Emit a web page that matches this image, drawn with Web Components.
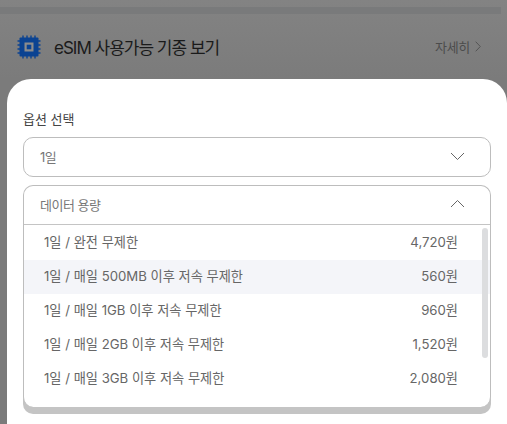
<!DOCTYPE html>
<html lang="ko"><head><meta charset="utf-8"><style>
html,body{margin:0;padding:0;height:100%;overflow:hidden}
body{font-family:Inter,"Noto Sans CJK KR",sans-serif;background:#808080}
</style></head><body>
<template id="t-backdrop"><style>
:host{display:flex;flex-direction:column;width:507px;height:424px;overflow:hidden;background:linear-gradient(#838383,#7b7b7b 79px);color:#222}
.stripe{height:7px;margin-top:7px;margin-right:6px;background:#797a7b;flex:none}
.row{box-sizing:border-box;height:49px;margin-top:9px;display:flex;align-items:center;padding:0 26px 2px 17px;flex:none;font-size:17px;letter-spacing:-1px}
svg{width:24px;height:24px;flex:none;margin-right:13px}
.t{flex:1;color:#1a1a1a}
.m{font-size:13px;color:#4c4c4c;display:flex;align-items:center;gap:5px;letter-spacing:-.3px}
.m svg{width:6px;height:11px;margin:0}
.sheet{flex:1;margin-top:7px;display:flex}
</style>
<div class="stripe"></div>
<div class="row">
<svg viewBox="0 0 24 24"><path fill="#0b4392" d="M3.500 2.500h17a1 1 0 0 1 1 1v17a1 1 0 0 1-1 1h-17a1 1 0 0 1-1-1v-17a1 1 0 0 1 1-1z"/><path stroke="#0b4392" stroke-width="1.400" fill="none" d="M6 .500v3M10 .500v3M14 .500v3M18 .500v3M6 20.500v3M10 20.500v3M14 20.500v3M18 20.500v3M.500 6h3M.500 10h3M.500 14h3M.500 18h3M20.500 6h3M20.500 10h3M20.500 14h3M20.500 18h3"/><rect x="7.500" y="7.500" width="9" height="9" fill="#8c8c8c"/><rect x="9.700" y="9.700" width="4.600" height="4.600" fill="#0b4392"/></svg>
<span class="t">eSIM 사용가능 기종 보기</span>
<span class="m">자세히<svg viewBox="0 0 6 11"><path d="M.7 .7l4.600 4.800-4.600 4.800" fill="none" stroke="#555" stroke-width="1"/></svg></span>
</div>
<div class="sheet"><slot></slot></div>
</template>

<template id="t-sheet"><style>
:host{display:block;box-sizing:border-box;width:500px;height:360px;margin-left:7px;background:#fff;border-radius:24px 24px 0 0;padding:30px 16px 0}
.l{font-size:13px;color:#444;line-height:20px;margin-bottom:8px;font-weight:400}
.g{display:flex;flex-direction:column;gap:8px}
</style><div class="l">옵션 선택</div><div class="g"><slot></slot></div></template>

<template id="t-select"><style>
:host{display:block;box-sizing:border-box;width:468px;border:1px solid #bdbdbd;border-radius:10px;background:#fff;height:40px}
:host([open]){height:222px;box-shadow:0 7px 0 0 #c4c4c4;border-bottom:0}
.h{box-sizing:border-box;height:38px;display:flex;align-items:center;justify-content:space-between;padding:0 25px 2px 16px;font-size:13px;color:#777;letter-spacing:-.5px}
:host([open]) .h{border-bottom:1px solid #c4c4c4;height:39px}
svg{width:15px;height:8px}
.list{position:relative;padding-top:1px;display:none}
:host([open]) .list{display:block}
.bar{position:absolute;right:2px;top:3px;width:6px;height:130px;background:#dcdddf;border-radius:3px}
</style><div class="h"><span><slot name="v"></slot></span><svg viewBox="0 0 15 8"><path id="c" d="M1 1l6.500 6.500L14 1" fill="none" stroke="#666" stroke-width="1"/></svg></div><div class="list"><slot></slot><div class="bar"></div></div></template>

<template id="t-row"><style>
:host{box-sizing:border-box;display:flex;justify-content:space-between;align-items:center;height:34px;padding:0 32px 3px 20px;font-size:13.200px;color:#666}
:host([hi]){background:#f4f5f9}
</style><span><slot></slot></span><span><slot name="p"></slot></span></template>

<script>
function def(n,t,fn){customElements.define(n,class extends HTMLElement{constructor(){super();this.attachShadow({mode:'open'}).appendChild(document.getElementById(t).content.cloneNode(true));}connectedCallback(){fn&&fn(this)}})}
def('x-backdrop','t-backdrop');
def('x-sheet','t-sheet');
def('x-select','t-select',e=>{if(e.hasAttribute('open'))e.shadowRoot.getElementById('c').setAttribute('d','M1 7l6.500-6.500L14 7')});
def('x-row','t-row');
</script>
<x-backdrop><x-sheet>
<x-select><span slot="v">1일</span></x-select>
<x-select open><span slot="v">데이터 용량</span>
<x-row>1일 / 완전 무제한<span slot="p">4,720원</span></x-row>
<x-row hi>1일 / 매일 500MB 이후 저속 무제한<span slot="p">560원</span></x-row>
<x-row>1일 / 매일 1GB 이후 저속 무제한<span slot="p">960원</span></x-row>
<x-row>1일 / 매일 2GB 이후 저속 무제한<span slot="p">1,520원</span></x-row>
<x-row>1일 / 매일 3GB 이후 저속 무제한<span slot="p">2,080원</span></x-row>
</x-select>
</x-sheet></x-backdrop>
</body></html>
